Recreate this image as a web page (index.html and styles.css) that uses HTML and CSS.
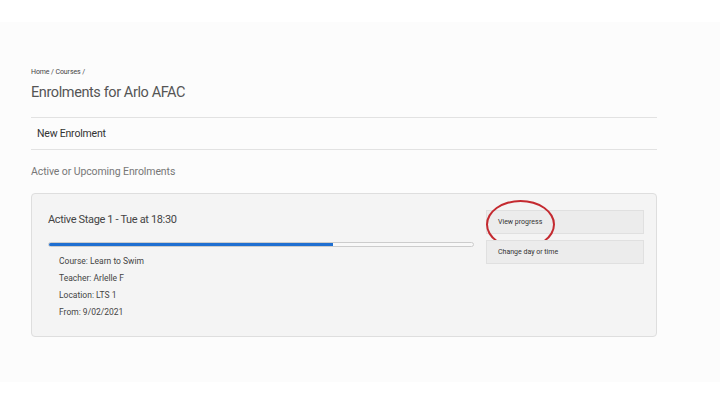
FILE: index.html
```html
<!DOCTYPE html>
<html lang="en">
<head>
  <meta charset="UTF-8" />
  <meta name="viewport" content="width=device-width, initial-scale=1.0"/>
  <title>Enrolments for Arlo AFAC</title>
  <link rel="stylesheet" href="styles.css">
</head>
<body>
  <div class="topbar"></div>

  <main class="page">
    <div class="breadcrumb">Home / Courses /</div>
    <h1>Enrolments for Arlo AFAC</h1>

    <div class="new-row">New Enrolment</div>

    <h2>Active or Upcoming Enrolments</h2>

    <div class="card">
      <div class="card-main">
        <h3>Active Stage 1 - Tue at 18:30</h3>
        <div class="progress"><div class="progress-fill" style="width: 67%"></div></div>
        <ul class="details">
          <li>Course: Learn to Swim</li>
          <li>Teacher: Arlelle F</li>
          <li>Location: LTS 1</li>
          <li>From: 9/02/2021</li>
        </ul>
      </div>
      <div class="card-actions">
        <button class="action-btn highlight">View progress</button>
        <button class="action-btn">Change day or time</button>
      </div>
    </div>
  </main>

  <div class="bottombar"></div>
</body>
</html>
```

FILE: styles.css
```css
* {
  margin: 0;
  padding: 0;
  box-sizing: border-box;
  font-family: Roboto, sans-serif;
}

body {
  background: #fff;
}

.topbar {
  height: 22px;
  background: #fff;
}

.page {
  background: #fcfcfc;
  height: 360px;
  padding: 46px 63px 0 31px;
}

.breadcrumb {
  font-size: 7px;
  line-height: 9px;
  color: #444;
  letter-spacing: -0.1px;
}

h1 {
  margin-top: 7px;
  font-size: 14.5px;
  line-height: 18px;
  font-weight: normal;
  color: #555;
  letter-spacing: -0.4px;
}

.new-row {
  margin-top: 15px;
  border-top: 1px solid #e2e2e2;
  border-bottom: 1px solid #e2e2e2;
  height: 33px;
  padding-left: 6px;
  display: flex;
  align-items: center;
  font-size: 10.5px;
  color: #333;
  letter-spacing: -0.2px;
}

h2 {
  margin-top: 15px;
  font-size: 10.5px;
  line-height: 14px;
  font-weight: normal;
  color: #777;
  letter-spacing: -0.1px;
}

.card {
  margin-top: 14px;
  background: #f4f4f4;
  border: 1px solid #dedede;
  border-radius: 4px;
  display: flex;
  align-items: flex-start;
  gap: 12px;
  padding: 19px 12px 15px 16px;
}

.card-main {
  flex: 0 0 426px;
}

h3 {
  font-size: 11px;
  line-height: 14px;
  font-weight: normal;
  color: #444;
  letter-spacing: -0.35px;
}

.progress {
  margin-top: 15px;
  height: 5px;
  border: 1px solid #ccc;
  border-radius: 3px;
  background: #f8f8f8;
  overflow: hidden;
}

.progress-fill {
  height: 100%;
  background: #1f6fd1;
}

.details {
  list-style: none;
  margin-top: 6px;
  padding-left: 11px;
}

.details li {
  font-size: 8.5px;
  line-height: 17px;
  color: #444;
}

.card-actions {
  flex: 1;
  display: grid;
  grid-template-rows: 24px 24px;
  row-gap: 6px;
  margin-top: -3px;
}

.action-btn {
  position: relative;
  height: 24px;
  background: #ececec;
  border: 1px solid #e0e0e0;
  text-align: left;
  padding-left: 11px;
  font-size: 7px;
  color: #333;
}

.highlight::after {
  content: '';
  position: absolute;
  left: -1px;
  top: -11px;
  width: 65px;
  height: 45px;
  border: 2px solid #c42a30;
  border-radius: 50%;
}

.bottombar {
  height: 23px;
  background: #fff;
}
```
